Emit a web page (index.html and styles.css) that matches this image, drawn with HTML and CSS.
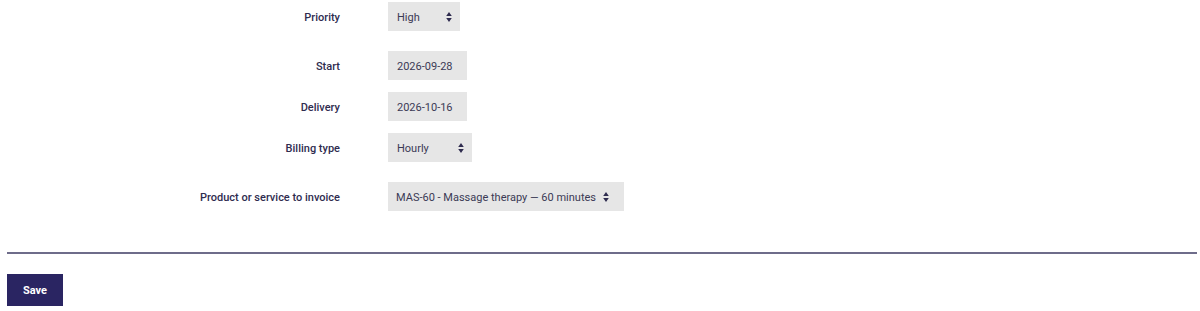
FILE: index.html
```html
<!DOCTYPE html>
<html lang="en">
<head>
  <meta charset="UTF-8" />
  <meta name="viewport" content="width=device-width, initial-scale=1.0" />
  <title>Project settings</title>
  <link rel="stylesheet" href="styles.css">
</head>
<body>
  <form class="project-form" onsubmit="return false;">
    <div class="row row-select">
      <label for="priority">Priority</label>
      <span class="select-wrap w-priority">
        <select id="priority">
          <option>High</option>
          <option>Normal</option>
          <option>Low</option>
        </select>
        <svg class="arrows" width="6" height="10" viewBox="0 0 6 10"><path d="M3 0 L5.8 4 H0.2 Z M3 10 L5.8 6 H0.2 Z" fill="#2f2c4f"/></svg>
      </span>
    </div>

    <div class="row">
      <label for="start">Start</label>
      <input id="start" class="field w-date" type="text" value="2026-09-28">
    </div>

    <div class="row">
      <label for="delivery">Delivery</label>
      <input id="delivery" class="field w-date" type="text" value="2026-10-16">
    </div>

    <div class="row row-select">
      <label for="billing">Billing type</label>
      <span class="select-wrap w-billing">
        <select id="billing">
          <option>Hourly</option>
          <option>Fixed</option>
        </select>
        <svg class="arrows" width="6" height="10" viewBox="0 0 6 10"><path d="M3 0 L5.8 4 H0.2 Z M3 10 L5.8 6 H0.2 Z" fill="#2f2c4f"/></svg>
      </span>
    </div>

    <div class="row">
      <label for="product">Product or service to invoice</label>
      <span class="select-wrap w-product">
        <select id="product">
          <option>MAS-60 - Massage therapy — 60 minutes</option>
        </select>
        <svg class="arrows" width="6" height="10" viewBox="0 0 6 10"><path d="M3 0 L5.8 4 H0.2 Z M3 10 L5.8 6 H0.2 Z" fill="#2f2c4f"/></svg>
      </span>
    </div>

    <hr class="divider">

    <button class="btn-save" type="submit">Save</button>
  </form>
</body>
</html>
```

FILE: styles.css
```css
body {
  margin: 0;
  font-family: Roboto, "Liberation Sans", sans-serif;
  color: #2f2c4f;
  background: #fff;
}

.project-form {
  padding-top: 2px;
}

.row {
  display: flex;
  align-items: center;
  height: 29px;
  margin-bottom: 12px;
}

.row-select {
  margin-bottom: 20px;
}

.row label {
  width: 340px;
  flex-shrink: 0;
  text-align: right;
  font-size: 11px;
  font-weight: 500;
  color: #2f2c4f;
  margin-right: 48px;
  padding-top: 2px;
}

.field,
.select-wrap select {
  height: 29px;
  box-sizing: border-box;
  border: none;
  background: #e6e6e6;
  font-family: Roboto, "Liberation Sans", sans-serif;
  font-size: 11px;
  color: #3b3a55;
  padding: 1px 9px 0;
  outline: none;
}

.w-date {
  width: 79px;
}

.select-wrap {
  position: relative;
  display: inline-block;
}

.select-wrap select {
  appearance: none;
  -webkit-appearance: none;
  width: 100%;
  cursor: pointer;
}

.w-priority { width: 72px; }
.w-billing { width: 84px; }
.w-product { width: 236px; }

.w-product select {
  padding-left: 8px;
}

.arrows {
  position: absolute;
  right: 8px;
  top: 10px;
  pointer-events: none;
}

.w-product .arrows {
  right: 15px;
}

.divider {
  border: none;
  border-top: 2px solid #6e6c8a;
  margin: 41px 3px 0 7px;
}

.btn-save {
  margin: 20px 0 0 7px;
  width: 56px;
  height: 32px;
  border: none;
  background: #2a2562;
  color: #fff;
  font-family: Roboto, "Liberation Sans", sans-serif;
  font-size: 11px;
  font-weight: 700;
  cursor: pointer;
}
```
